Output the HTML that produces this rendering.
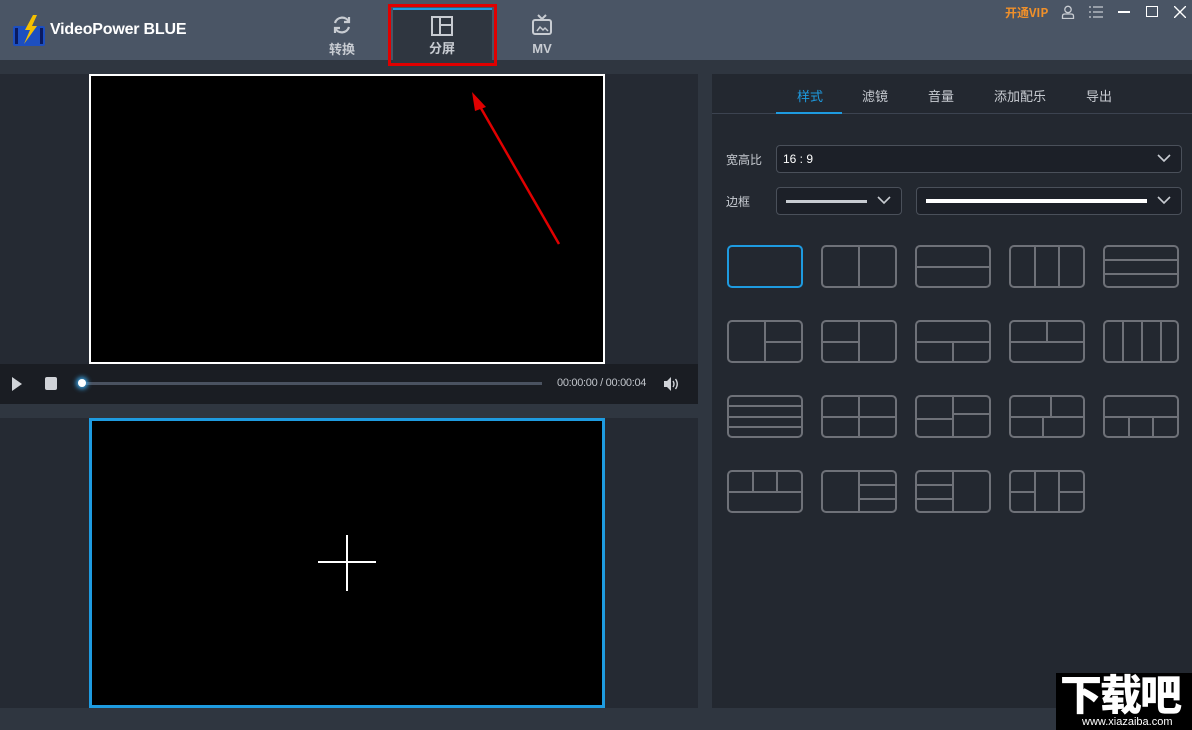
<!DOCTYPE html>
<html><head><meta charset="utf-8"><style>
*{margin:0;padding:0;box-sizing:border-box}
body{width:1192px;height:730px;overflow:hidden;background:#2f3640;font-family:"Liberation Sans","Noto Sans CJK SC",sans-serif;position:relative}
.abs{position:absolute}
.title{left:0;top:0;width:1192px;height:60px;background:#4a5565}
.cn{font-family:"Noto Sans CJK SC","Liberation Sans",sans-serif}
.tab{color:#c8ccd2;font-size:13px;font-weight:bold;text-align:center}
.rt{color:#c8ccd2;font-size:13px}
</style></head><body>
<div class="abs title"></div>
<svg class="abs" style="left:11px;top:14px" width="36" height="34" viewBox="0 0 36 34">
<rect x="2" y="12" width="32" height="20" rx="2" fill="#1d4fc0"/>
<rect x="4" y="14" width="3" height="16" fill="#0a1a60"/><rect x="29" y="14" width="3" height="16" fill="#0a1a60"/>
<path d="M22 1 L14 16 L19 16 L13 30 L26 12 L21 12 L26 1Z" fill="#f5c000"/>
</svg>
<div class="abs" style="left:50px;top:21px;color:#fff;font-size:16px;font-weight:bold;letter-spacing:-0.2px">VideoPower BLUE</div>
<svg class="abs" style="left:331px;top:14px" width="22" height="22" viewBox="0 0 22 22" fill="none" stroke="#c8ccd2" stroke-width="2.2"><path d="M4 9 A7.5 7.5 0 0 1 18 8"/><path d="M18 13 A7.5 7.5 0 0 1 4 14"/><path d="M18 3 V8 H13"/><path d="M4 19 V14 H9"/></svg>
<div class="abs tab cn" style="left:320px;top:39px;width:44px">转换</div>
<div class="abs" style="left:393px;top:8px;width:99px;height:54px;background:#2f3640;border-top:2px solid #1e9be0"></div>
<svg class="abs" style="left:431px;top:16px" width="22" height="20" viewBox="0 0 22 20" fill="none" stroke="#c8ccd2" stroke-width="2"><rect x="1" y="1" width="20" height="18"/><path d="M9 1 V19 M9 9 H21"/></svg>
<div class="abs tab cn" style="left:420px;top:38px;width:44px">分屏</div>
<div class="abs" style="left:388px;top:4px;width:109px;height:62px;border:3px solid #e00000"></div>
<svg class="abs" style="left:531px;top:14px" width="22" height="22" viewBox="0 0 22 22" fill="none" stroke="#c8ccd2" stroke-width="2"><rect x="2" y="6" width="18" height="14" rx="2"/><path d="M7 1 L11 5 L15 1"/><path d="M6 17 L9 13 L12 16 L14 14 L17 17" stroke-width="1.5"/></svg>
<div class="abs tab" style="left:520px;top:41px;width:44px">MV</div>
<div class="abs cn" style="left:1005px;top:4px;color:#f0902a;font-size:12px;font-weight:bold">开通VIP</div>
<svg class="abs" style="left:1061px;top:5px" width="14" height="14" viewBox="0 0 14 14" fill="none" stroke="#c8ccd2" stroke-width="1.3"><circle cx="7" cy="4.5" r="3.2"/><path d="M1.5 13.5 V11 Q1.5 9 4 9 H10 Q12.5 9 12.5 11 V13.5Z"/></svg>
<svg class="abs" style="left:1089px;top:6px" width="14" height="12" viewBox="0 0 14 12" stroke="#c8ccd2" stroke-width="1.3"><path d="M0 1H2M4 1H14M0 6H2M4 6H14M0 11H2M4 11H14"/></svg>
<div class="abs" style="left:1118px;top:11px;width:12px;height:2px;background:#fff"></div>
<div class="abs" style="left:1146px;top:6px;width:12px;height:11px;border:1.5px solid #fff"></div>
<svg class="abs" style="left:1174px;top:6px" width="12" height="12" viewBox="0 0 12 12" stroke="#fff" stroke-width="1.4"><path d="M0 0L12 12M12 0L0 12"/></svg>
<div class="abs" style="left:0;top:74px;width:698px;height:290px;background:#252a33"></div>
<div class="abs" style="left:89px;top:74px;width:516px;height:290px;background:#000;border:2px solid #fff"></div>
<div class="abs" style="left:0;top:364px;width:698px;height:40px;background:#1a1d23"></div>
<svg class="abs" style="left:11px;top:376px" width="12" height="16"><path d="M1 1L11 8L1 15Z" fill="#d0d3d8"/></svg>
<div class="abs" style="left:45px;top:377px;width:12px;height:13px;background:#d0d3d8;border-radius:2px"></div>
<div class="abs" style="left:82px;top:382px;width:460px;height:3px;background:#4a5260"></div>
<div class="abs" style="left:78px;top:379px;width:8px;height:8px;border-radius:50%;background:#fff;box-shadow:0 0 5px 2px #3aa0e0"></div>
<div class="abs" style="left:557px;top:377px;color:#c0c4ca;font-size:11px;letter-spacing:-0.3px">00:00:00 / 00:00:04</div>
<svg class="abs" style="left:664px;top:377px" width="16" height="14" viewBox="0 0 16 14" fill="#d0d3d8"><path d="M0 4H3L7 0V14L3 10H0Z"/><path d="M9 4Q11 7 9 10M11.5 2Q15 7 11.5 12" stroke="#d0d3d8" stroke-width="1.4" fill="none"/></svg>
<div class="abs" style="left:0;top:418px;width:698px;height:290px;background:#252a33"></div>
<div class="abs" style="left:89px;top:418px;width:516px;height:290px;background:#000;border:3px solid #1e9be0"></div>
<div class="abs" style="left:346px;top:535px;width:2px;height:56px;background:#fff"></div>
<div class="abs" style="left:318px;top:561px;width:58px;height:2px;background:#fff"></div>
<svg class="abs" style="left:460px;top:85px" width="110" height="170"><path d="M99 159 L18 18" stroke="#e00000" stroke-width="2.5"/><path d="M12 7 L26 22 L15 26Z" fill="#e00000"/></svg>
<div class="abs" style="left:712px;top:74px;width:480px;height:634px;background:#232830"></div>
<div class="abs" style="left:712px;top:113px;width:480px;height:1px;background:#3c4350"></div>
<div class="abs rt cn" style="left:797px;top:86px;color:#1e9be0">样式</div>
<div class="abs" style="left:776px;top:112px;width:66px;height:2px;background:#1e9be0"></div>
<div class="abs rt cn" style="left:862px;top:86px">滤镜</div>
<div class="abs rt cn" style="left:928px;top:86px">音量</div>
<div class="abs rt cn" style="left:994px;top:86px">添加配乐</div>
<div class="abs rt cn" style="left:1086px;top:86px">导出</div>
<div class="abs rt cn" style="left:726px;top:151px;font-size:12px">宽高比</div>
<div class="abs" style="left:776px;top:145px;width:406px;height:28px;background:#1c2028;border:1px solid #4a505a;border-radius:4px"></div>
<div class="abs" style="left:783px;top:152px;color:#fff;font-size:12px">16 : 9</div>
<svg class="abs" style="left:1157px;top:154px" width="14" height="9" fill="none" stroke="#c8ccd2" stroke-width="1.6"><path d="M1 1L7 7L13 1"/></svg>
<div class="abs rt cn" style="left:726px;top:193px;font-size:12px">边框</div>
<div class="abs" style="left:776px;top:187px;width:126px;height:28px;background:#1c2028;border:1px solid #4a505a;border-radius:4px"></div>
<div class="abs" style="left:786px;top:200px;width:81px;height:3px;background:#c8ccd2"></div>
<svg class="abs" style="left:877px;top:196px" width="14" height="9" fill="none" stroke="#c8ccd2" stroke-width="1.6"><path d="M1 1L7 7L13 1"/></svg>
<div class="abs" style="left:916px;top:187px;width:266px;height:28px;background:#1c2028;border:1px solid #4a505a;border-radius:4px"></div>
<div class="abs" style="left:926px;top:199px;width:221px;height:4px;background:#fff"></div>
<svg class="abs" style="left:1157px;top:196px" width="14" height="9" fill="none" stroke="#c8ccd2" stroke-width="1.6"><path d="M1 1L7 7L13 1"/></svg>
<svg class="abs" style="left:712px;top:230px" width="480" height="300" fill="none" stroke="#6e7178" stroke-width="2">
<g transform="translate(16,16)"><rect x="0" y="0" width="74" height="41" rx="4" stroke="#1e9be0"/></g>
<g transform="translate(110,16)"><rect width="74" height="41" rx="4"/><path d="M37 0V41"/></g>
<g transform="translate(204,16)"><rect width="74" height="41" rx="4"/><path d="M0 21H74"/></g>
<g transform="translate(298,16)"><rect width="74" height="41" rx="4"/><path d="M25 0V41M49 0V41"/></g>
<g transform="translate(392,16)"><rect width="74" height="41" rx="4"/><path d="M0 14H74M0 28H74"/></g>
<g transform="translate(16,91)"><rect width="74" height="41" rx="4"/><path d="M37 0V41M37 21H74"/></g>
<g transform="translate(110,91)"><rect width="74" height="41" rx="4"/><path d="M37 0V41M0 21H37"/></g>
<g transform="translate(204,91)"><rect width="74" height="41" rx="4"/><path d="M0 21H74M37 21V41"/></g>
<g transform="translate(298,91)"><rect width="74" height="41" rx="4"/><path d="M0 21H74M37 0V21"/></g>
<g transform="translate(392,91)"><rect width="74" height="41" rx="4"/><path d="M19 0V41M38 0V41M57 0V41"/></g>
<g transform="translate(16,166)"><rect width="74" height="41" rx="4"/><path d="M0 10H74M0 21H74M0 31H74"/></g>
<g transform="translate(110,166)"><rect width="74" height="41" rx="4"/><path d="M37 0V41M0 21H74"/></g>
<g transform="translate(204,166)"><rect width="74" height="41" rx="4"/><path d="M37 0V41M0 23H37M37 18H74"/></g>
<g transform="translate(298,166)"><rect width="74" height="41" rx="4"/><path d="M0 21H74M41 0V21M33 21V41"/></g>
<g transform="translate(392,166)"><rect width="74" height="41" rx="4"/><path d="M0 21H74M25 21V41M49 21V41"/></g>
<g transform="translate(16,241)"><rect width="74" height="41" rx="4"/><path d="M0 21H74M25 0V21M49 0V21"/></g>
<g transform="translate(110,241)"><rect width="74" height="41" rx="4"/><path d="M37 0V41M37 14H74M37 28H74"/></g>
<g transform="translate(204,241)"><rect width="74" height="41" rx="4"/><path d="M37 0V41M0 14H37M0 28H37"/></g>
<g transform="translate(298,241)"><rect width="74" height="41" rx="4"/><path d="M25 0V41M49 0V41M0 21H25M49 21H74"/></g>
</svg>
<div class="abs" style="left:0;top:708px;width:1192px;height:22px;background:#2f3640"></div>
<div class="abs" style="left:1056px;top:673px;width:136px;height:57px;background:#000"></div>
<div class="abs cn" style="left:1060px;top:668px;color:#fff;font-size:42px;font-weight:900;letter-spacing:-2px;line-height:50px">下载吧</div>
<div class="abs" style="left:1082px;top:716px;color:#fff;font-size:11px">www.xiazaiba.com</div>
</body></html>
